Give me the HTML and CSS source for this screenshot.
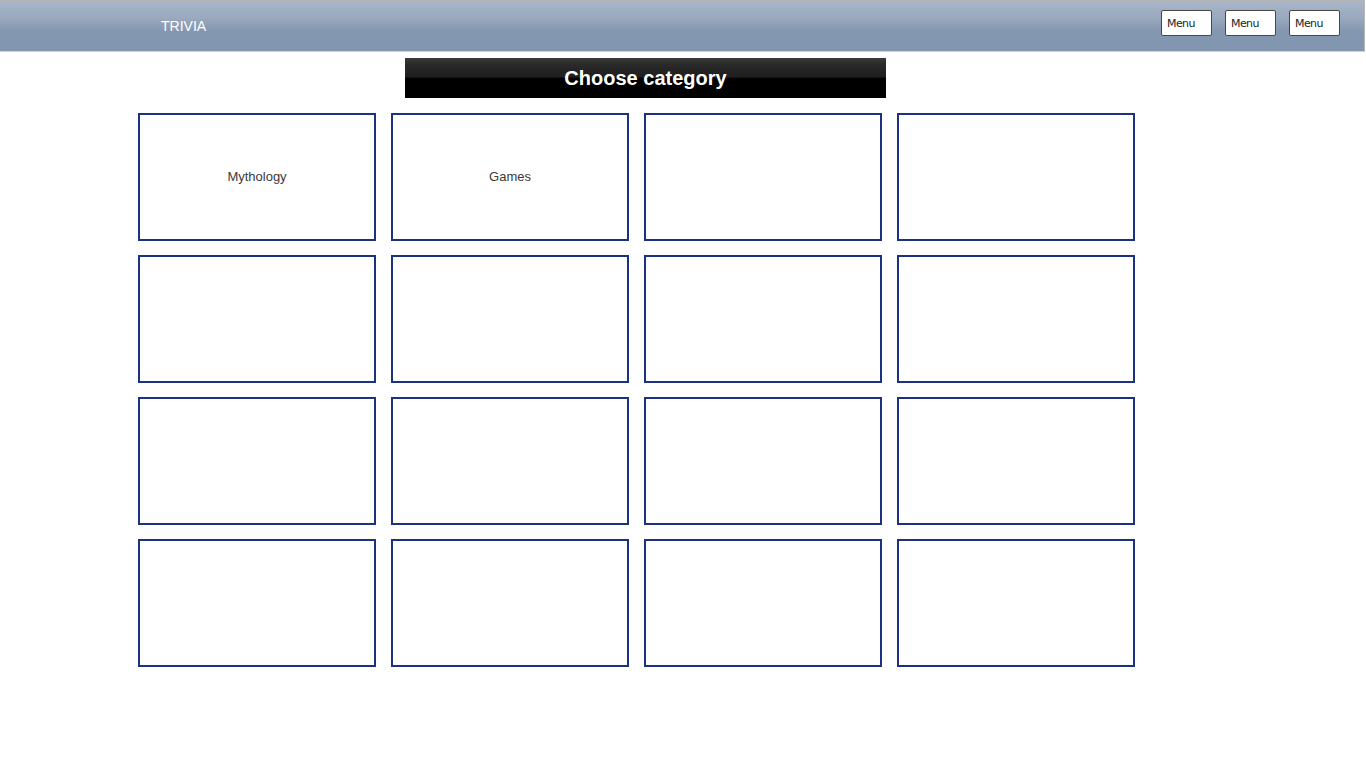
FILE: index.html
```html
<!DOCTYPE html>
<html>
<head>
<meta charset="utf-8">
<title>Trivia</title>
<link rel="stylesheet" href="styles.css">
</head>
<body>
<header class="topbar">
  <div class="brand">TRIVIA</div>
  <nav class="menus">
    <button class="menu-btn">Menu</button>
    <button class="menu-btn">Menu</button>
    <button class="menu-btn">Menu</button>
  </nav>
</header>
<main class="content">
  <h1 class="title">Choose category</h1>
  <section class="grid">
    <div class="card">Mythology</div>
    <div class="card">Games</div>
    <div class="card"></div>
    <div class="card"></div>
    <div class="card"></div>
    <div class="card"></div>
    <div class="card"></div>
    <div class="card"></div>
    <div class="card"></div>
    <div class="card"></div>
    <div class="card"></div>
    <div class="card"></div>
    <div class="card"></div>
    <div class="card"></div>
    <div class="card"></div>
    <div class="card"></div>
  </section>
</main>
</body>
</html>
```
FILE: styles.css
```css
html, body {
  margin: 0;
  padding: 0;
  background: #ffffff;
  font-family: "Liberation Sans", Arial, sans-serif;
}

.topbar {
  width: 1365px;
  height: 52px;
  box-sizing: border-box;
  border-top: 1px solid #b4b4b4;
  border-bottom: 1px solid #d2d2d2;
  border-right: 1px solid #b8b8b8;
  background: linear-gradient(to bottom, #aab6c8 0%, #99a8bd 35%, #8497b1 60%, #8296b0 100%);
  display: flex;
  align-items: center;
  justify-content: space-between;
}

.brand {
  margin-left: 161px;
  color: #ffffff;
  font-size: 14px;
  letter-spacing: 0;
}

.menus {
  display: flex;
  gap: 13px;
  margin-right: 24px;
  margin-top: -6px;
}

.menu-btn {
  width: 51px;
  height: 26px;
  box-sizing: border-box;
  border: 1px solid #474747;
  border-radius: 2px;
  background: #ffffff;
  color: #222;
  font-family: "Comic Sans MS", "DejaVu Sans", sans-serif;
  font-size: 11px;
  text-align: left;
  padding: 0 0 0 5px;
  letter-spacing: -0.6px;
  cursor: pointer;
}

.content {
  display: flex;
  flex-direction: column;
  align-items: flex-start;
}

.title {
  margin: 6px 0 0 405px;
  width: 481px;
  height: 40px;
  box-sizing: border-box;
  background: linear-gradient(to bottom, #3c3c3c 0%, #2a2a2a 15%, #1e1e1e 48%, #000000 50%, #000000 100%);
  color: #ffffff;
  font-size: 20px;
  font-weight: bold;
  text-align: center;
  line-height: 40px;
}

.grid {
  margin: 15px 0 0 138px;
  display: grid;
  grid-template-columns: repeat(4, 238px);
  grid-auto-rows: 128px;
  column-gap: 15px;
  row-gap: 14px;
}

.card {
  box-sizing: border-box;
  border: 2px solid #1b3281;
  background: #ffffff;
  display: flex;
  align-items: center;
  justify-content: center;
  padding-bottom: 2px;
  font-size: 13px;
  color: #3a3a3a;
}
```
